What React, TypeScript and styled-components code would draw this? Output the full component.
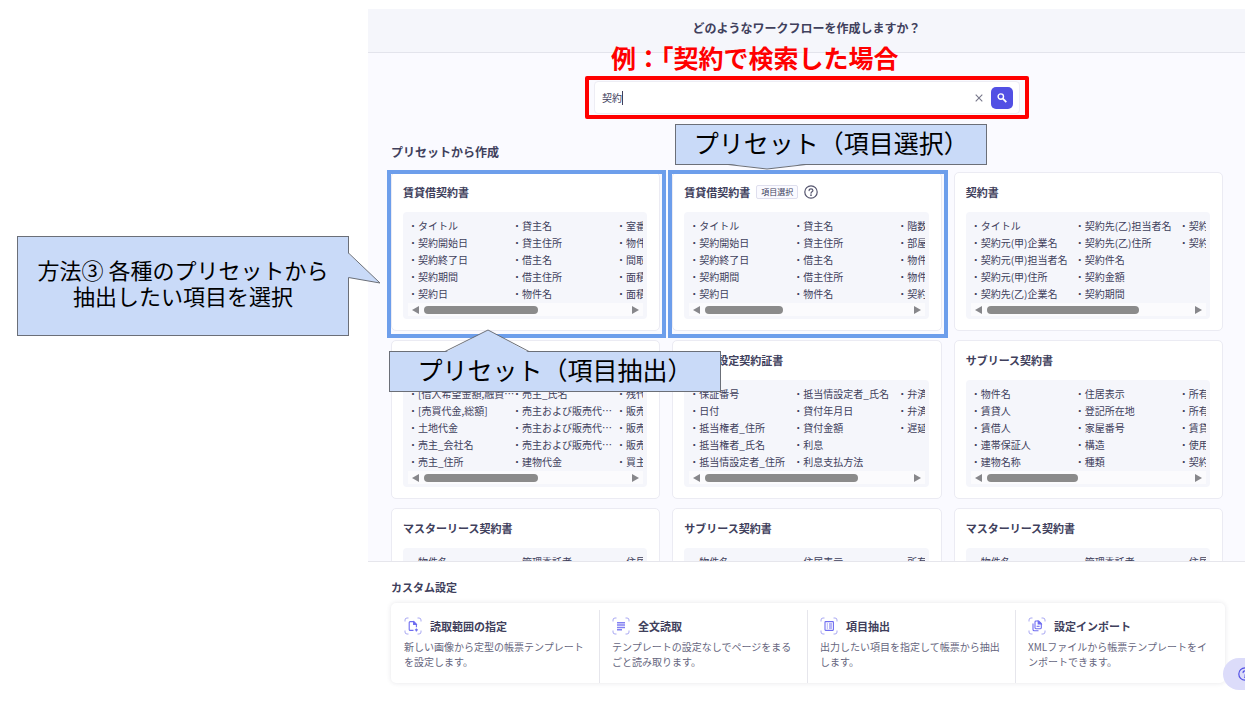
import React from "react";
import styled, { createGlobalStyle } from "styled-components";

const GlobalStyle = createGlobalStyle`
  *, *::before, *::after { box-sizing: border-box; }
  body {
    margin: 0;
    background: #ffffff;
    color: #40405c;
    font-family: "Noto Sans CJK JP", "Noto Sans", sans-serif;
  }
  h1, h2, h3, p, ul { margin: 0; padding: 0; }
  button, input { font: inherit; color: inherit; }
`;

const Page = styled.div`
  display: flex;
  height: 100vh;
  overflow: hidden;
`;

const Notes = styled.aside`
  flex: 0 0 368px;
  padding: 236px 19px 0 17px;
`;

const Panel = styled.main`
  position: relative;
  flex: 1;
  min-width: 0;
  display: flex;
  flex-direction: column;
  margin: 9px 12px 0 0;
  background: #fafaff;
`;

const Header = styled.header`
  padding: 10px 0 15px;
  background: #f5f6fb;
  border-bottom: 1px solid #e3e4ec;
`;

const PageTitle = styled.h1`
  font-size: 12px;
  line-height: 18px;
  font-weight: 700;
  text-align: center;
`;

const Body = styled.section`
  flex: 1 1 0;
  min-height: 0;
  padding: 23px 22px 0 23px;
`;

const SearchFrame = styled.div`
  position: relative;
  width: 444px;
  margin: 0 auto;
  padding: 1px 5px;
  border: 4px solid #ff0000;
  border-radius: 2px;
`;

const SearchNote = styled.p`
  position: absolute;
  left: 22px;
  bottom: 100%;
  z-index: 2;
  font-size: 25px;
  line-height: 46px;
  font-weight: 700;
  color: #ff0000;
  white-space: nowrap;
`;

const SearchForm = styled.form`
  position: relative;
  display: flex;
  align-items: center;
  gap: 6px;
  height: 33px;
  padding: 0 6px 0 7px;
  background: #ffffff;
  border: 1px solid #ededf4;
  border-radius: 4px;
`;

const SearchInput = styled.input`
  flex: 1;
  min-width: 0;
  padding: 0;
  border: 0;
  outline: 0;
  background: transparent;
  font-size: 10px;
  line-height: 16px;
`;

const Caret = styled.span`
  position: absolute;
  left: 27px;
  top: 9px;
  width: 1px;
  height: 14px;
  background: #40405c;
`;

const ClearButton = styled.button`
  display: flex;
  padding: 2px;
  border: 0;
  background: none;
  color: #77778a;
`;

const SubmitButton = styled.button`
  display: flex;
  align-items: center;
  justify-content: center;
  width: 22px;
  height: 22px;
  padding: 0;
  border: 0;
  border-radius: 5px;
  background: #5250e4;
  color: #ffffff;
`;

const SectionTitle = styled.h2<{ $small?: boolean }>`
  font-size: ${(p) => (p.$small ? 11 : 12)}px;
  line-height: 18px;
  font-weight: 700;
`;

const PresetHeading = styled.div`
  padding: 24px 0 11px;
`;

const PresetGrid = styled.div`
  display: grid;
  grid-template-columns: repeat(3, minmax(0, 1fr));
  gap: 9px 12px;
`;

const Card = styled.article<{ $marked?: boolean }>`
  position: relative;
  padding: 10px 12px 11px 11px;
  background: #ffffff;
  border: 1px solid #ebebf3;
  border-radius: 5px;
  ${(p) =>
    p.$marked &&
    `&::after {
      content: "";
      position: absolute;
      inset: -3px -7px -8px -5px;
      border: 4px solid #6d9eeb;
    }`}
`;

const CardHead = styled.div`
  display: flex;
  align-items: center;
  gap: 6px;
  height: 18px;
  margin-bottom: 11px;
`;

const CardTitle = styled.h3`
  font-size: 11px;
  line-height: 18px;
  font-weight: 700;
  white-space: nowrap;
`;

const Badge = styled.span`
  padding: 0 4px;
  border: 1px solid #dfdfee;
  border-radius: 2px;
  background: #fafaff;
  font-size: 8px;
  line-height: 12px;
`;

const HelpButton = styled.button`
  display: flex;
  padding: 0;
  border: 0;
  background: none;
  color: #55556e;
`;

const FieldBox = styled.div`
  padding: 5px 4px 3px 5px;
  background: #f5f6fb;
  border-radius: 4px;
`;

const FieldList = styled.ul`
  display: grid;
  grid-auto-flow: column;
  grid-template-rows: repeat(5, 17px);
  grid-auto-columns: 104px;
  overflow: hidden;
  list-style: none;
`;

const Field = styled.li`
  font-size: 10px;
  line-height: 17px;
  white-space: nowrap;
  &::before { content: "・"; }
`;

const ScrollBar = styled.div`
  display: flex;
  align-items: center;
  gap: 5px;
  height: 13px;
  margin-top: 1px;
  padding: 0 4px;
  background: #fbfbfd;
`;

const ScrollArrow = styled.span<{ $right?: boolean }>`
  border: 4px solid transparent;
  border-width: 4px ${(p) => (p.$right ? "0 4px 7px" : "7px 4px 0")};
  ${(p) => (p.$right ? "border-left-color" : "border-right-color")}: #87878b;
`;

const ScrollTrack = styled.div`
  flex: 1;
`;

const ScrollThumb = styled.div<{ $size: number }>`
  width: ${(p) => p.$size}%;
  height: 8px;
  border-radius: 4px;
  background: #8b8b8b;
`;

const CustomSection = styled.section`
  position: relative;
  z-index: 4;
  padding: 16px 20px 21px 23px;
  background: #ffffff;
  border-top: 1px solid #e6e6ec;
`;

const OptionRow = styled.div`
  display: grid;
  grid-template-columns: repeat(4, minmax(0, 1fr));
  margin-top: 7px;
  padding: 7px 2px 0 0;
  border-radius: 5px;
  box-shadow: 0 0 5px rgba(40, 40, 70, 0.12);
`;

const Option = styled.button`
  display: flex;
  flex-direction: column;
  padding: 7px 13px 14px;
  border: 0;
  background: none;
  text-align: left;
  & + & {
    padding-left: 12px;
    border-left: 1px solid #e6e6ec;
  }
`;

const OptionHead = styled.span`
  display: flex;
  align-items: center;
  gap: 8px;
  font-size: 11px;
  line-height: 18px;
  font-weight: 700;
`;

const OptionText = styled.span`
  max-width: 18em;
  margin-top: 4px;
  font-size: 10px;
  line-height: 15px;
  color: #66667e;
`;

const FloatClip = styled.div`
  position: absolute;
  right: 0;
  bottom: 14px;
  z-index: 5;
  width: 22px;
  overflow: hidden;
`;

const FloatButton = styled.button`
  display: flex;
  align-items: center;
  width: 48px;
  height: 32px;
  padding: 0 0 0 15px;
  border: 0;
  border-radius: 16px;
  background: #dcdcfa;
  color: #5250e4;
`;

const Callout = styled.div<{ $size: number }>`
  position: relative;
  display: flex;
  align-items: center;
  justify-content: center;
  padding-bottom: 6px;
  background: #c9daf8;
  border: 1px solid #6b6f78;
  color: #000000;
  font-size: ${(p) => p.$size}px;
  line-height: 26px;
  text-align: center;
  white-space: nowrap;
`;

const MethodCallout = styled(Callout)`
  z-index: 6;
  height: 100px;
  padding-bottom: 8px;
`;

const SelectCallout = styled(Callout)`
  position: absolute;
  z-index: 3;
  left: 2px;
  top: -49px;
  width: 312px;
  height: 41px;
`;

const ExtractCallout = styled(Callout)`
  position: absolute;
  z-index: 3;
  left: -3px;
  top: 178px;
  width: 332px;
  height: 41px;
`;

const Pointer = styled.svg<{ $side: "right" | "down" | "up" }>`
  position: absolute;
  fill: #c9daf8;
  stroke: #6b6f78;
  ${(p) =>
    p.$side === "right"
      ? "left: 100%; top: 16px;"
      : p.$side === "down"
        ? "left: 52px; top: 100%;"
        : "left: 55px; bottom: 100%;"}
`;

const HelpIcon = ({ size }: { size: number }) => (
  <svg width={size} height={size} viewBox="0 0 14 14" fill="none" stroke="currentColor" strokeWidth="1.2" strokeLinecap="round" aria-hidden="true">
    <circle cx="7" cy="7" r="6.2" />
    <path d="M5.1 5.6c0-1.1.8-1.8 1.9-1.8s1.9.7 1.9 1.7c0 1.3-1.9 1.4-1.9 2.7" />
    <circle cx="7" cy="10.2" r=".3" fill="currentColor" />
  </svg>
);

type IconKind = "range" | "text" | "items" | "import";

const OptionIcon = ({ kind }: { kind: IconKind }) => (
  <svg width="18" height="18" viewBox="0 0 18 18" fill="none" stroke="#6f6df0" strokeWidth="1.1" aria-hidden="true">
    <path stroke="#a9a8f2" strokeWidth="1" d="M1 4.5V3a2 2 0 0 1 2-2h1.5M13.5 1H15a2 2 0 0 1 2 2v1.5M17 13.5V15a2 2 0 0 1-2 2h-1.5M4.5 17H3a2 2 0 0 1-2-2v-1.5" />
    {kind === "range" && (
      <>
        <path d="M9.5 13.400H6.200a1 1 0 0 1-1-1V5.600a1 1 0 0 1 1-1h3.600l2.600 2.600v3" />
        <path fill="#6f6df0" d="M9.600 4.800v2.600h2.600z" />
        <path d="M12.400 11.400v3M10.900 12.900h3" />
      </>
    )}
    {kind === "text" && <path stroke="#8280f2" strokeWidth="1.5" d="M5 5.800h8M5 8.100h8M5 10.400h8M5 12.700h5" />}
    {kind === "items" && (
      <>
        <rect x="5" y="4.600" width="8.400" height="8.800" rx=".6" />
        <path strokeWidth="1" d="M6.800 7h1M9 7h3M6.800 9h1M9 9h3M6.800 11h1M9 11h3" />
      </>
    )}
    {kind === "import" && (
      <>
        <path d="M5 6.500v6a1.300 1.300 0 0 0 1.300 1.300h4.200" />
        <path d="M7 4.900a.9.9 0 0 1 .9-.9h2.800l2.600 2.600v4.200a.9.9 0 0 1-.9.9H7.900a.9.9 0 0 1-.9-.9z" />
        <path fill="#6f6df0" d="M10.200 4.200v2.800h2.900z" />
        <path d="M8.600 9.300h3" />
      </>
    )}
  </svg>
);

type Preset = {
  title: string;
  thumb: number;
  fields: string[];
  selectable?: boolean;
  marked?: boolean;
  callout?: "extract" | "select";
};

const master = ["物件名", "賃貸人", "賃借人", "建物名称", "構造", "管理委託者", "登記所在地", "家屋番号", "種類", "床面積", "住居表示", "所有者", "賃料", "使用目的", "契約期間"];
const sublease = ["物件名", "賃貸人", "賃借人", "連帯保証人", "建物名称", "住居表示", "登記所在地", "家屋番号", "構造", "種類", "所有者", "所有者住所", "賃貸面積", "使用目的", "契約期間"];

const presets: Preset[] = [
  {
    title: "賃貸借契約書",
    thumb: 56,
    marked: true,
    callout: "extract",
    fields: ["タイトル", "契約開始日", "契約終了日", "契約期間", "契約日", "貸主名", "貸主住所", "借主名", "借主住所", "物件名", "室番号", "物件住所", "間取り", "面積", "面積単位"],
  },
  {
    title: "賃貸借契約書",
    thumb: 38,
    selectable: true,
    marked: true,
    callout: "select",
    fields: ["タイトル", "契約開始日", "契約終了日", "契約期間", "契約日", "貸主名", "貸主住所", "借主名", "借主住所", "物件名", "階数", "部屋番号", "物件住所", "物件種別", "契約条件"],
  },
  {
    title: "契約書",
    thumb: 75,
    fields: ["タイトル", "契約元(甲)企業名", "契約元(甲)担当者名", "契約元(甲)住所", "契約先(乙)企業名", "契約先(乙)担当者名", "契約先(乙)住所", "契約件名", "契約金額", "契約期間", "契約開始日", "契約終了日"],
  },
  {
    title: "不動産売買契約書",
    thumb: 56,
    fields: ["[借入希望金額,融資…", "[売買代金,総額]", "土地代金", "売主_会社名", "売主_住所", "売主_氏名", "売主および販売代…", "売主および販売代…", "売主および販売代…", "建物代金", "残代金", "販売代理", "販売代理", "販売代理", "買主_氏名"],
  },
  {
    title: "抵当権設定契約証書",
    thumb: 75,
    fields: ["保証番号", "日付", "抵当権者_住所", "抵当権者_氏名", "抵当情設定者_住所", "抵当情設定者_氏名", "貸付年月日", "貸付金額", "利息", "利息支払方法", "弁済方法", "弁済期限", "遅延損害金"],
  },
  { title: "サブリース契約書", thumb: 45, fields: sublease },
  { title: "マスターリース契約書", thumb: 45, fields: master },
  { title: "サブリース契約書", thumb: 45, fields: sublease },
  { title: "マスターリース契約書", thumb: 45, fields: master },
];

const options: { icon: IconKind; title: string; text: string }[] = [
  { icon: "range", title: "読取範囲の指定", text: "新しい画像から定型の帳票テンプレートを設定します。" },
  { icon: "text", title: "全文読取", text: "テンプレートの設定なしでページをまるごと読み取ります。" },
  { icon: "items", title: "項目抽出", text: "出力したい項目を指定して帳票から抽出します。" },
  { icon: "import", title: "設定インポート", text: "XMLファイルから帳票テンプレートをインポートできます。" },
];

const PresetCard = ({ preset }: { preset: Preset }) => (
  <Card $marked={preset.marked}>
    <CardHead>
      <CardTitle>{preset.title}</CardTitle>
      {preset.selectable && (
        <>
          <Badge>項目選択</Badge>
          <HelpButton type="button" aria-label="ヘルプ">
            <HelpIcon size={14} />
          </HelpButton>
        </>
      )}
    </CardHead>
    <FieldBox>
      <FieldList>
        {preset.fields.map((field, i) => (
          <Field key={i}>{field}</Field>
        ))}
      </FieldList>
      <ScrollBar aria-hidden="true">
        <ScrollArrow />
        <ScrollTrack>
          <ScrollThumb $size={preset.thumb} />
        </ScrollTrack>
        <ScrollArrow $right />
      </ScrollBar>
    </FieldBox>
    {preset.callout === "extract" && (
      <ExtractCallout $size={25}>
        プリセット（項目抽出）
        <Pointer $side="up" width="84" height="23" viewBox="0 0 84 23">
          <path stroke="none" d="M1 23L43 1L83 23Z" />
          <path fill="none" d="M0 22.5L43 1L84 22.5" />
        </Pointer>
      </ExtractCallout>
    )}
    {preset.callout === "select" && (
      <SelectCallout $size={25}>
        プリセット（項目選択）
        <Pointer $side="down" width="78" height="6" viewBox="0 0 78 6">
          <path stroke="none" d="M1 0L39 5L77 0Z" />
          <path fill="none" d="M0 .5L39 5L78 .5" />
        </Pointer>
      </SelectCallout>
    )}
  </Card>
);

export default function App() {
  return (
    <Page lang="ja">
      <GlobalStyle />
      <Notes>
        <MethodCallout $size={22}>
          <p>
            方法③ 各種のプリセットから
            <br />
            抽出したい項目を選択
          </p>
          <Pointer $side="right" width="33" height="32" viewBox="0 0 33 32">
            <path stroke="none" d="M0 0L32 30L0 24.500Z" />
            <path fill="none" d="M.5 0L32 30L.5 24.500" />
          </Pointer>
        </MethodCallout>
      </Notes>
      <Panel>
        <Header>
          <PageTitle>どのようなワークフローを作成しますか？</PageTitle>
        </Header>
        <Body>
          <SearchFrame>
            <SearchNote>例：「契約で検索した場合</SearchNote>
            <SearchForm role="search" onSubmit={(e) => e.preventDefault()}>
              <SearchInput aria-label="検索" defaultValue="契約" />
              <Caret />
              <ClearButton type="button" aria-label="クリア">
                <svg width="8" height="8" viewBox="0 0 8 8" stroke="currentColor" strokeWidth="1.1" aria-hidden="true">
                  <path d="M.7.7l6.600 6.600M7.300.7L.7 7.300" />
                </svg>
              </ClearButton>
              <SubmitButton type="submit" aria-label="検索する">
                <svg width="12" height="12" viewBox="0 0 12 12" fill="none" stroke="currentColor" aria-hidden="true">
                  <circle cx="4.8" cy="4.6" r="2.7" strokeWidth="1.4" />
                  <path strokeWidth="1.8" d="M6.900 6.700l3.400 3.400" />
                </svg>
              </SubmitButton>
            </SearchForm>
          </SearchFrame>
          <PresetHeading>
            <SectionTitle>プリセットから作成</SectionTitle>
          </PresetHeading>
          <PresetGrid>
            {presets.map((preset, i) => (
              <PresetCard key={i} preset={preset} />
            ))}
          </PresetGrid>
        </Body>
        <CustomSection>
          <SectionTitle $small>カスタム設定</SectionTitle>
          <OptionRow>
            {options.map((option) => (
              <Option key={option.icon} type="button">
                <OptionHead>
                  <OptionIcon kind={option.icon} />
                  {option.title}
                </OptionHead>
                <OptionText>{option.text}</OptionText>
              </Option>
            ))}
          </OptionRow>
        </CustomSection>
        <FloatClip>
          <FloatButton type="button" aria-label="サポート">
            <HelpIcon size={14} />
          </FloatButton>
        </FloatClip>
      </Panel>
    </Page>
  );
}
